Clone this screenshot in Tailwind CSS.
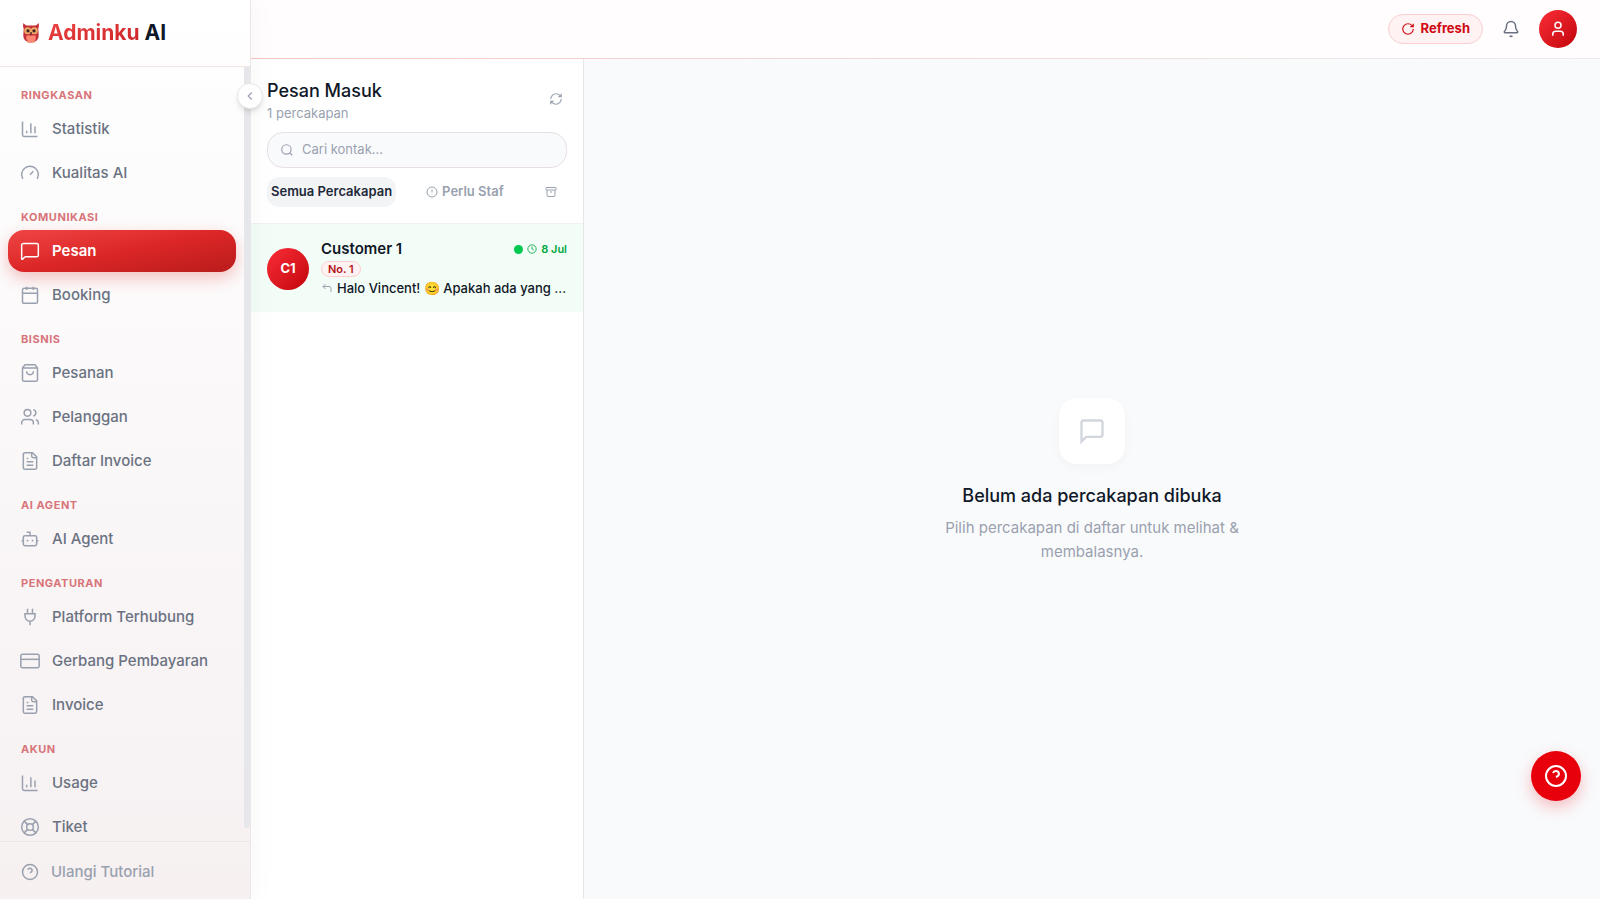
<!DOCTYPE html>
<html lang="id">
<head>
    <meta charset="UTF-8">
    <meta name="viewport" content="width=device-width, initial-scale=1.0">
    <title>Adminku AI - Pesan</title>
    <script src="https://cdn.jsdelivr.net/npm/@tailwindcss/browser@4"></script>
</head>
<body class="font-['Inter',sans-serif] bg-[#f9fafc] text-gray-900">
    <!-- Icon set -->
    <svg class="hidden" aria-hidden="true">
        <symbol id="chart" viewBox="0 0 24 24"><path d="M3 3v16a2 2 0 0 0 2 2h16M18 17V9M13 17V5M8 17v-3"/></symbol>
        <symbol id="gauge" viewBox="0 0 24 24"><path d="m12 14 4-4M3.34 19a10 10 0 1 1 17.32 0"/></symbol>
        <symbol id="message" viewBox="0 0 24 24"><path d="M21 15a2 2 0 0 1-2 2H7l-4 4V5a2 2 0 0 1 2-2h14a2 2 0 0 1 2 2z"/></symbol>
        <symbol id="message-wide" viewBox="0 0 24 24"><path d="M22 17a2 2 0 0 1-2 2H6.830a2 2 0 0 0-1.420.59l-2.200 2.200A.71.71 0 0 1 2 21.290V5a2 2 0 0 1 2-2h16a2 2 0 0 1 2 2z"/></symbol>
        <symbol id="calendar" viewBox="0 0 24 24"><path d="M8 2v4M16 2v4M3 10h18"/><rect width="18" height="18" x="3" y="4" rx="2"/></symbol>
        <symbol id="bag" viewBox="0 0 24 24"><path d="M6 2 3 6v14a2 2 0 0 0 2 2h14a2 2 0 0 0 2-2V6l-3-4ZM3 6h18M16 10a4 4 0 0 1-8 0"/></symbol>
        <symbol id="users" viewBox="0 0 24 24"><path d="M16 21v-2a4 4 0 0 0-4-4H6a4 4 0 0 0-4 4v2"/><circle cx="9" cy="7" r="4"/><path d="M22 21v-2a4 4 0 0 0-3-3.870M16 3.130a4 4 0 0 1 0 7.750"/></symbol>
        <symbol id="file" viewBox="0 0 24 24"><path d="M15 2H6a2 2 0 0 0-2 2v16a2 2 0 0 0 2 2h12a2 2 0 0 0 2-2V7ZM14 2v4a2 2 0 0 0 2 2h4M10 9H8M16 13H8M16 17H8"/></symbol>
        <symbol id="bot" viewBox="0 0 24 24"><path d="M12 8V4H8M2 14h2M20 14h2M15 13v2M9 13v2"/><rect width="16" height="12" x="4" y="8" rx="2"/></symbol>
        <symbol id="plug" viewBox="0 0 24 24"><path d="M12 22v-5M9 8V2M15 8V2M5 8h14M18 8v3a6 6 0 0 1-12 0V8"/></symbol>
        <symbol id="card" viewBox="0 0 24 24"><rect width="22" height="16" x="1" y="4" rx="2"/><path d="M1 10h22"/></symbol>
        <symbol id="buoy" viewBox="0 0 24 24"><circle cx="12" cy="12" r="10"/><path d="m4.93 4.93 4.24 4.24M14.83 9.17l4.24-4.24M14.83 14.83l4.24 4.24M9.17 14.83l-4.24 4.24"/><circle cx="12" cy="12" r="4"/></symbol>
        <symbol id="help" viewBox="0 0 24 24"><circle cx="12" cy="12" r="10"/><path d="M9.09 9a3 3 0 0 1 5.83 1c0 2-3 3-3 3M12 17h.01"/></symbol>
        <symbol id="chevron" viewBox="0 0 24 24"><path d="m15 18-6-6 6-6"/></symbol>
        <symbol id="rotate" viewBox="0 0 24 24"><path d="M21 12a9 9 0 1 1-9-9c2.52 0 4.93 1 6.74 2.74L21 8M21 3v5h-5"/></symbol>
        <symbol id="refresh" viewBox="0 0 24 24"><path d="M3 12a9 9 0 0 1 9-9 9.75 9.75 0 0 1 6.74 2.74L21 8M21 3v5h-5M21 12a9 9 0 0 1-9 9 9.75 9.75 0 0 1-6.74-2.74L3 16M8 16H3v5"/></symbol>
        <symbol id="bell" viewBox="0 0 24 24"><path d="M10.27 21a2 2 0 0 0 3.46 0M3.26 15.33A1 1 0 0 0 4 17h16a1 1 0 0 0 .74-1.67C19.41 13.96 18 12.5 18 8A6 6 0 0 0 6 8c0 4.5-1.41 5.96-2.74 7.33"/></symbol>
        <symbol id="user" viewBox="0 0 24 24"><path d="M19 21v-2a4 4 0 0 0-4-4H9a4 4 0 0 0-4 4v2"/><circle cx="12" cy="7" r="4"/></symbol>
        <symbol id="search" viewBox="0 0 24 24"><circle cx="11" cy="11" r="8"/><path d="m21 21-4.3-4.3"/></symbol>
        <symbol id="alert" viewBox="0 0 24 24"><circle cx="12" cy="12" r="10"/><path d="M12 7v6M12 16v1"/></symbol>
        <symbol id="archive" viewBox="0 0 24 24"><rect width="20" height="5" x="2" y="3" rx="1"/><path d="M4 8v11a2 2 0 0 0 2 2h12a2 2 0 0 0 2-2V8M10 12h4"/></symbol>
        <symbol id="clock" viewBox="0 0 24 24"><circle cx="12" cy="12" r="10"/><path d="M12 6v6l4 2"/></symbol>
        <symbol id="reply" viewBox="0 0 24 24"><path d="M9 14 4 9l5-5M20 20v-7a4 4 0 0 0-4-4H4"/></symbol>
    </svg>

    <div class="flex h-screen">
        <!-- Sidebar -->
        <aside class="relative z-10 flex w-[251px] shrink-0 flex-col border-r border-[#ece6e8] bg-linear-to-b from-white to-[#f6f0f1] shadow-[4px_0_24px_rgba(0,0,0,0.03)]">
            <div class="flex h-[67px] shrink-0 items-center gap-2 border-b border-[#f3e4e6] px-[22px]">
                <svg class="h-5 w-[18px]" viewBox="0 0 18 20" aria-hidden="true">
                    <path d="M1.500 0C3 2 4 2.500 6 2.500h6c2 0 3-.5 4.500-2.500.8 2.500.4 4-.2 5.500l.4 7C16.700 17 13 19.500 9 19.500s-7.700-2.500-7.700-7l.4-7C1.100 4 .7 2.500 1.500 0z" fill="#c4303a"/>
                    <path d="M4.500 12.500h9c1 4-1 7-4.500 7s-5.500-3-4.500-7z" fill="#ff8674"/>
                    <circle cx="5.700" cy="7.800" r="3.500" fill="#efa765"/>
                    <circle cx="12.300" cy="7.800" r="3.500" fill="#efa765"/>
                    <circle cx="6" cy="7.800" r="1.600" fill="#3b2024"/>
                    <circle cx="12" cy="7.800" r="1.600" fill="#3b2024"/>
                    <path d="M7.800 9.300h2.400L9 13z" fill="#5a3330"/>
                    <path d="M5.500 19h2M10.500 19h2" stroke="#efa765" stroke-width="1.500"/>
                </svg>
                <span class="text-[21px] leading-7 font-bold"><span class="bg-linear-to-br from-[#ef4444] to-[#c92026] bg-clip-text text-transparent">Adminku</span> AI</span>
            </div>

            <nav class="relative flex min-h-0 flex-1 flex-col gap-[15px] overflow-hidden pt-5 pr-[14px] pl-2 text-[15px] font-medium text-gray-500">
                <div>
                    <h2 class="mb-[5px] px-[13px] text-[11px] leading-4 font-bold tracking-wider text-[#d8747a]">RINGKASAN</h2>
                    <div class="flex flex-col gap-[2px]">
                        <a href="#" class="flex h-[42px] items-center gap-3 rounded-2xl px-3"><svg class="size-5 fill-none stroke-gray-400 stroke-[1.8]"><use href="#chart"/></svg>Statistik</a>
                        <a href="#" class="flex h-[42px] items-center gap-3 rounded-2xl px-3"><svg class="size-5 fill-none stroke-gray-400 stroke-[1.8]"><use href="#gauge"/></svg>Kualitas AI</a>
                    </div>
                </div>
                <div>
                    <h2 class="mb-[5px] px-[13px] text-[11px] leading-4 font-bold tracking-wider text-[#d8747a]">KOMUNIKASI</h2>
                    <div class="flex flex-col gap-[2px]">
                        <a href="#" aria-current="page" class="flex h-[42px] items-center gap-3 rounded-2xl bg-linear-to-br from-[#ef4444] via-[#dc2626] to-[#b91c1c] px-3 font-semibold text-white shadow-[0_6px_16px_rgba(220,38,38,0.28)]"><svg class="size-5 fill-none stroke-white stroke-[1.8]"><use href="#message-wide"/></svg>Pesan</a>
                        <a href="#" class="flex h-[42px] items-center gap-3 rounded-2xl px-3"><svg class="size-5 fill-none stroke-gray-400 stroke-[1.8]"><use href="#calendar"/></svg>Booking</a>
                    </div>
                </div>
                <div>
                    <h2 class="mb-[5px] px-[13px] text-[11px] leading-4 font-bold tracking-wider text-[#d8747a]">BISNIS</h2>
                    <div class="flex flex-col gap-[2px]">
                        <a href="#" class="flex h-[42px] items-center gap-3 rounded-2xl px-3"><svg class="size-5 fill-none stroke-gray-400 stroke-[1.8]"><use href="#bag"/></svg>Pesanan</a>
                        <a href="#" class="flex h-[42px] items-center gap-3 rounded-2xl px-3"><svg class="size-5 fill-none stroke-gray-400 stroke-[1.8]"><use href="#users"/></svg>Pelanggan</a>
                        <a href="#" class="flex h-[42px] items-center gap-3 rounded-2xl px-3"><svg class="size-5 fill-none stroke-gray-400 stroke-[1.8]"><use href="#file"/></svg>Daftar Invoice</a>
                    </div>
                </div>
                <div>
                    <h2 class="mb-[5px] px-[13px] text-[11px] leading-4 font-bold tracking-wider text-[#d8747a]">AI AGENT</h2>
                    <a href="#" class="flex h-[42px] items-center gap-3 rounded-2xl px-3"><svg class="size-5 fill-none stroke-gray-400 stroke-[1.8]"><use href="#bot"/></svg>AI Agent</a>
                </div>
                <div>
                    <h2 class="mb-[5px] px-[13px] text-[11px] leading-4 font-bold tracking-wider text-[#d8747a]">PENGATURAN</h2>
                    <div class="flex flex-col gap-[2px]">
                        <a href="#" class="flex h-[42px] items-center gap-3 rounded-2xl px-3"><svg class="size-5 fill-none stroke-gray-400 stroke-[1.8]"><use href="#plug"/></svg>Platform Terhubung</a>
                        <a href="#" class="flex h-[42px] items-center gap-3 rounded-2xl px-3"><svg class="size-5 fill-none stroke-gray-400 stroke-[1.8]"><use href="#card"/></svg>Gerbang Pembayaran</a>
                        <a href="#" class="flex h-[42px] items-center gap-3 rounded-2xl px-3"><svg class="size-5 fill-none stroke-gray-400 stroke-[1.8]"><use href="#file"/></svg>Invoice</a>
                    </div>
                </div>
                <div>
                    <h2 class="mb-[5px] px-[13px] text-[11px] leading-4 font-bold tracking-wider text-[#d8747a]">AKUN</h2>
                    <div class="flex flex-col gap-[2px]">
                        <a href="#" class="flex h-[42px] items-center gap-3 rounded-2xl px-3"><svg class="size-5 fill-none stroke-gray-400 stroke-[1.8]"><use href="#chart"/></svg>Usage</a>
                        <a href="#" class="flex h-[42px] items-center gap-3 rounded-2xl px-3"><svg class="size-5 fill-none stroke-gray-400 stroke-[1.8]"><use href="#buoy"/></svg>Tiket</a>
                    </div>
                </div>
                <!-- Scroll thumb -->
                <div class="absolute top-0 right-0 bottom-[13px] w-[6px] rounded-b bg-gray-200"></div>
            </nav>

            <div class="flex h-[58px] shrink-0 items-center border-t border-[#efe6e8] px-[21px] pt-[3px]">
                <button type="button" class="flex items-center gap-3 text-[15px] font-medium text-gray-400"><svg class="size-[18px] fill-none stroke-gray-400 stroke-2"><use href="#help"/></svg>Ulangi Tutorial</button>
            </div>

            <button type="button" aria-label="Tutup sidebar" class="absolute top-[83px] -right-[13px] flex size-[26px] items-center justify-center rounded-full border border-[#eee5e7] bg-white shadow-md"><svg class="size-3.5 fill-none stroke-gray-400 stroke-2"><use href="#chevron"/></svg></button>
        </aside>

        <div class="flex min-w-0 flex-1 flex-col">
            <!-- Top bar -->
            <header class="flex h-[58px] shrink-0 items-center justify-end bg-[#fffdfd] pr-[23px]">
                <button type="button" class="flex h-[30px] items-center gap-1.5 rounded-full border border-[#fbcfcf] bg-[#fef2f2] px-3 text-[13px] font-bold text-[#cf0a12]"><svg class="size-3.5 fill-none stroke-current stroke-2"><use href="#rotate"/></svg>Refresh</button>
                <button type="button" aria-label="Notifikasi" class="ml-[18px] p-px"><svg class="size-[18px] fill-none stroke-gray-500 stroke-2"><use href="#bell"/></svg></button>
                <button type="button" aria-label="Profil" class="ml-[18px] flex size-[38px] items-center justify-center rounded-full bg-linear-to-br from-[#fb2c36] to-[#c10007]"><svg class="size-[18px] fill-none stroke-white stroke-2"><use href="#user"/></svg></button>
            </header>
            <div class="h-px shrink-0 bg-linear-to-r from-[#f9c6c2] to-[#ececf0]"></div>

            <main class="flex min-h-0 flex-1">
                <!-- Conversation list -->
                <section class="flex w-[333px] shrink-0 flex-col border-r border-gray-200 bg-white">
                    <div class="border-b border-[#f1f1f3] px-4 pt-[18px] pb-4">
                        <div class="flex items-center justify-between">
                            <div>
                                <h1 class="text-[18px] leading-7 font-medium">Pesan Masuk</h1>
                                <p class="text-[13px] leading-4 text-gray-400">1 percakapan</p>
                            </div>
                            <button type="button" aria-label="Muat ulang" class="p-1"><svg class="size-3.5 fill-none stroke-gray-400 stroke-2"><use href="#refresh"/></svg></button>
                        </div>
                        <label class="mt-[11px] flex h-9 items-center gap-2 rounded-2xl border border-[#e6e0e6] bg-[#f9fafc] px-3">
                            <svg class="size-3.5 shrink-0 fill-none stroke-gray-400 stroke-2"><use href="#search"/></svg>
                            <input type="search" aria-label="Cari kontak" placeholder="Cari kontak..." class="min-w-0 flex-1 bg-transparent text-[13px] outline-none placeholder:text-gray-400">
                        </label>
                        <div class="mt-[9px] flex items-center text-[13px] font-semibold text-gray-400">
                            <button type="button" class="h-[30px] rounded-xl bg-gray-100 px-1 text-gray-800">Semua Percakapan</button>
                            <button type="button" class="ml-[30px] flex h-[30px] items-center gap-1"><svg class="size-3 fill-none stroke-current stroke-2"><use href="#alert"/></svg>Perlu Staf</button>
                            <button type="button" aria-label="Arsip" class="mr-[10px] ml-auto"><svg class="size-3 fill-none stroke-current stroke-2"><use href="#archive"/></svg></button>
                        </div>
                    </div>

                    <a href="#" class="flex items-center gap-3 bg-[#f3fdf7] px-4 pt-[15px] pb-[14px]">
                        <span class="flex size-[42px] shrink-0 items-center justify-center rounded-full bg-linear-to-br from-[#fb2c36] to-[#c10007] text-[13px] font-bold text-white">C1</span>
                        <span class="flex min-w-0 flex-1 flex-col">
                            <span class="flex items-center justify-between leading-5">
                                <span class="text-[15px] font-semibold">Customer 1</span>
                                <span class="flex items-center gap-1 text-[11px] font-semibold text-[#00a63e]"><span class="size-[9px] rounded-full bg-[#00c950]"></span><svg class="size-2.5 fill-none stroke-current stroke-2"><use href="#clock"/></svg>8 Jul</span>
                            </span>
                            <span class="mt-[2px] flex h-4 items-center self-start rounded-full border border-[#ffd0d0] bg-[#fef2f2] px-1.5 text-[11px] font-semibold text-[#b4141a]">No. 1</span>
                            <span class="mt-px flex items-center gap-1 text-[13px] leading-5 font-medium whitespace-nowrap">
                                <svg class="size-3 shrink-0 fill-none stroke-gray-400 stroke-2"><use href="#reply"/></svg>
                                <span>Halo Vincent! 😊 Apakah ada yang ...</span>
                            </span>
                        </span>
                    </a>
                </section>

                <!-- Empty state -->
                <section class="flex min-w-0 flex-1 flex-col items-center justify-center pt-[3px] text-center">
                    <div class="flex size-[66px] items-center justify-center rounded-[18px] bg-white shadow-[0_4px_12px_rgba(0,0,0,0.03)]"><svg class="size-7 fill-none stroke-gray-300 stroke-2"><use href="#message"/></svg></div>
                    <h2 class="mt-[18px] text-[18px] leading-7 font-medium">Belum ada percakapan dibuka</h2>
                    <p class="mt-[6px] w-80 text-[15px] leading-6 text-gray-400">Pilih percakapan di daftar untuk melihat &amp; membalasnya.</p>
                </section>
            </main>
        </div>
    </div>

    <button type="button" aria-label="Bantuan" class="fixed right-[19px] bottom-[98px] flex size-[50px] items-center justify-center rounded-full bg-[#e7000b] shadow-[0_6px_16px_rgba(231,0,11,0.25)]"><svg class="size-6 fill-none stroke-white stroke-2"><use href="#help"/></svg></button>
</body>
</html>
